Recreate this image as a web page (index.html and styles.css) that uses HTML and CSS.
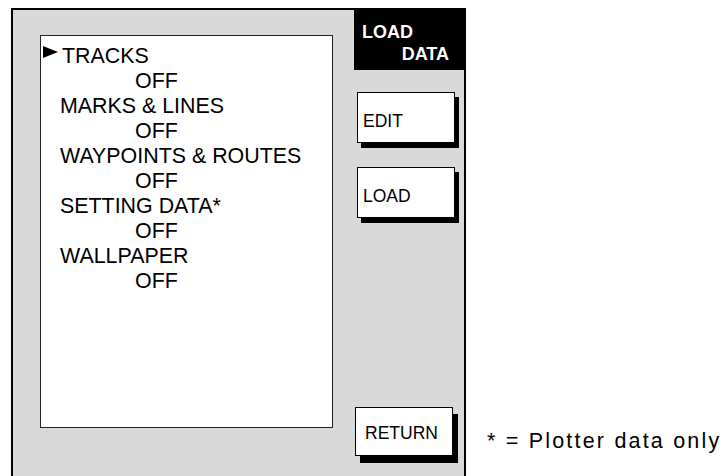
FILE: index.html
```html
<!DOCTYPE html>
<html lang="en">
<head>
<meta charset="UTF-8" />
<meta name="viewport" content="width=device-width, initial-scale=1" />
<title>Load Data</title>
<link rel="stylesheet" href="styles.css">
</head>
<body>
  <div class="panel">
    <ul class="data-list" aria-label="Data to load">
      <li class="item selected">
        <svg class="cursor" width="15" height="12" viewBox="0 0 15 12" aria-hidden="true"><polygon points="0,0 15,6 0,12" /></svg>TRACKS
      </li>
      <li class="value">OFF</li>
      <li class="item">MARKS &amp; LINES</li>
      <li class="value">OFF</li>
      <li class="item">WAYPOINTS &amp; ROUTES</li>
      <li class="value">OFF</li>
      <li class="item">SETTING DATA*</li>
      <li class="value">OFF</li>
      <li class="item">WALLPAPER</li>
      <li class="value">OFF</li>
    </ul>

    <div class="sidebar">
      <div class="menu-title">
        <span>LOAD</span>
        <span class="second">DATA</span>
      </div>
      <button class="soft-key edit">EDIT</button>
      <button class="soft-key load">LOAD</button>
      <button class="soft-key return">RETURN</button>
    </div>
  </div>

  <p class="footnote">* = Plotter data only</p>
</body>
</html>
```

FILE: styles.css
```css
/* Reset */
* {
  box-sizing: border-box;
}

html, body {
  overflow: hidden;
}

body {
  margin: 0;
  padding: 8px 0 0 11px;
  background: #fff;
  color: #000;
  font-family: 'Liberation Sans', Arial, Helvetica, sans-serif;
  display: flex;
  align-items: flex-start;
}

.panel {
  width: 455px;
  height: 468px;
  border: 2px solid #000;
  border-bottom: none;
  background: #d9d9d9;
  display: flex;
  padding-left: 27px;
  gap: 21px;
}

/* list of data groups */
.data-list {
  list-style: none;
  margin: 25px 0 0;
  padding: 8px 0 0;
  width: 293px;
  height: 393px;
  background: #fff;
  border: 1px solid #222;
  font-size: 21.4px;
  line-height: 25px;
}

.item {
  padding-left: 19px;
  white-space: nowrap;
}

.value {
  padding-left: 94px;
}

.cursor {
  width: 15px;
  height: 12px;
  margin-left: -17px;
  margin-right: 4px;
  vertical-align: 5px;
  fill: #000;
}

/* soft keys */
.sidebar {
  width: 110px;
  display: flex;
  flex-direction: column;
  padding-bottom: 20px;
}

.menu-title {
  margin: -2px -2px 0 0;
  height: 62px;
  background: #000;
  color: #fff;
  font-size: 18px;
  font-weight: bold;
  line-height: 22px;
  padding: 13px 17px 0 8px;
  display: flex;
  flex-direction: column;
}

.menu-title .second {
  align-self: flex-end;
}

.soft-key {
  width: 98px;
  height: 51px;
  margin-left: 3px;
  border: 1px solid #000;
  background: #fff;
  box-shadow: 4px 5px 0 #000;
  font-family: inherit;
  font-size: 17.5px;
  color: #000;
  text-align: left;
  padding: 7px 0 0 5px;
  display: flex;
  align-items: center;
  cursor: pointer;
}

.soft-key.edit {
  margin-top: 22px;
}

.soft-key.load {
  margin-top: 24px;
}

.soft-key.return {
  margin-top: auto;
  margin-left: 1px;
  height: 49px;
  padding-left: 9px;
  padding-top: 4px;
  box-shadow: 5px 7px 0 #000;
}

.footnote {
  margin: 421px 0 0 21px;
  font-size: 21.5px;
  line-height: 24px;
  letter-spacing: 2.2px;
  white-space: nowrap;
}
```
